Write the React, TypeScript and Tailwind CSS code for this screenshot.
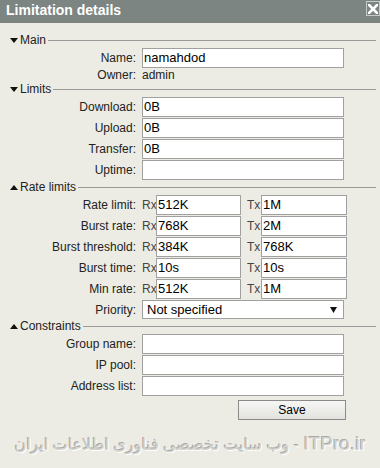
import React from "react";

const font = { fontFamily: '"Liberation Sans", Arial, sans-serif' };

function Header({ title, down }: { title: string; down?: boolean }) {
  return (
    <div className="flex items-center h-[14px] mb-[1px] pl-[10px] pr-[4px]">
      <svg width="8" height="5" viewBox="0 0 8 5" className="shrink-0">
        {down ? (
          <polygon points="0,0 8,0 4,5" fill="#111" />
        ) : (
          <polygon points="0,5 8,5 4,0" fill="#111" />
        )}
      </svg>
      <span className="ml-[2px] text-[12px] leading-[14px] text-[#222]">{title}</span>
      <div className="flex-1 h-px bg-[#9a9a9a] ml-[2px]" />
    </div>
  );
}

function Input({ value, w }: { value?: string; w: string }) {
  return (
    <div
      className={`${w} h-[20px] bg-white border border-[#a0a0a0] pl-[1px] text-[13px] leading-[18px] text-black overflow-hidden whitespace-nowrap`}
    >
      {value}
    </div>
  );
}

function Row({ label, value }: { label: string; value?: string }) {
  return (
    <div className="flex items-center mb-[1px]">
      <div className="w-[136px] text-right text-[12px] text-[#222]">{label}</div>
      <div className="ml-[6px]">
        <Input value={value} w="w-[202px]" />
      </div>
    </div>
  );
}

function RateRow({ label, rx, tx }: { label: string; rx: string; tx: string }) {
  return (
    <div className="flex items-center mb-[1px]">
      <div className="w-[136px] text-right text-[12px] text-[#222]">{label}</div>
      <div className="ml-[6px] w-[14px] text-[12px] text-[#444]">Rx</div>
      <Input value={rx} w="w-[85px]" />
      <div className="ml-[6px] w-[14px] text-[12px] text-[#444]">Tx</div>
      <Input value={tx} w="w-[86px]" />
    </div>
  );
}

export default function App() {
  return (
    <div className="w-[380px] h-[468px] bg-[#ecece4] overflow-hidden relative" style={font}>
      <div className="h-[23px] bg-[#7c8581] flex items-start">
        <div className="pl-[6px] text-white font-bold text-[14px] leading-[20px]">
          Limitation details
        </div>
        <div className="ml-auto mt-[1px] w-[14px] h-[15px] border border-[#c8ccc8] flex items-center justify-center">
          <svg width="10" height="10" viewBox="0 0 10 10">
            <path d="M1 1 L9 9 M9 1 L1 9" stroke="#fff" strokeWidth="2.6" strokeLinecap="square" />
          </svg>
        </div>
      </div>

      <div className="mt-[10px]">
        <Header title="Main" down />
        <Row label="Name:" value="namahdod" />
        <div className="flex items-center h-[13px]">
          <div className="w-[136px] text-right text-[12px] text-[#222] leading-[13px]">Owner:</div>
          <div className="ml-[6px] text-[12px] text-[#222] leading-[13px]">admin</div>
        </div>

        <Header title="Limits" down />
        <Row label="Download:" value="0B" />
        <Row label="Upload:" value="0B" />
        <Row label="Transfer:" value="0B" />
        <div className="mb-[-1px]">
          <Row label="Uptime:" value="" />
        </div>

        <Header title="Rate limits" />
        <RateRow label="Rate limit:" rx="512K" tx="1M" />
        <RateRow label="Burst rate:" rx="768K" tx="2M" />
        <RateRow label="Burst threshold:" rx="384K" tx="768K" />
        <RateRow label="Burst time:" rx="10s" tx="10s" />
        <RateRow label="Min rate:" rx="512K" tx="1M" />
        <div className="flex items-center">
          <div className="w-[136px] text-right text-[12px] text-[#222]">Priority:</div>
          <div className="ml-[6px] w-[202px] h-[19px] bg-white border border-[#a0a0a0] flex items-center pl-[4px] pr-[6px] text-[13px] text-black">
            <span>Not specified</span>
            <svg width="7" height="6" viewBox="0 0 7 6" className="ml-auto">
              <polygon points="0,0 7,0 3.5,6" fill="#111" />
            </svg>
          </div>
        </div>

        <Header title="Constraints" />
        <Row label="Group name:" value="" />
        <Row label="IP pool:" value="" />
        <Row label="Address list:" value="" />

        <div className="flex mt-[4px]">
          <div className="ml-[238px] w-[108px] h-[20px] border border-[#8a8a8a] bg-gradient-to-b from-[#f6f6f4] to-[#e2e2de] flex items-center justify-center text-[12px] text-black">
            Save
          </div>
        </div>

        <div
          dir="rtl"
          className="mt-[13px] pr-[14px] text-[16px] leading-[22px] text-[#d2d2ce] whitespace-nowrap [text-shadow:-1px_-1px_0_#a9a9a6,1px_1px_0_#ffffff]"
          style={{ fontFamily: '"Liberation Sans", "DejaVu Sans", sans-serif' }}
        >
          <span className="text-[19px]">ITPro.ir</span> - وب سایت تخصصی فناوری اطلاعات ایران
        </div>
      </div>
    </div>
  );
}
